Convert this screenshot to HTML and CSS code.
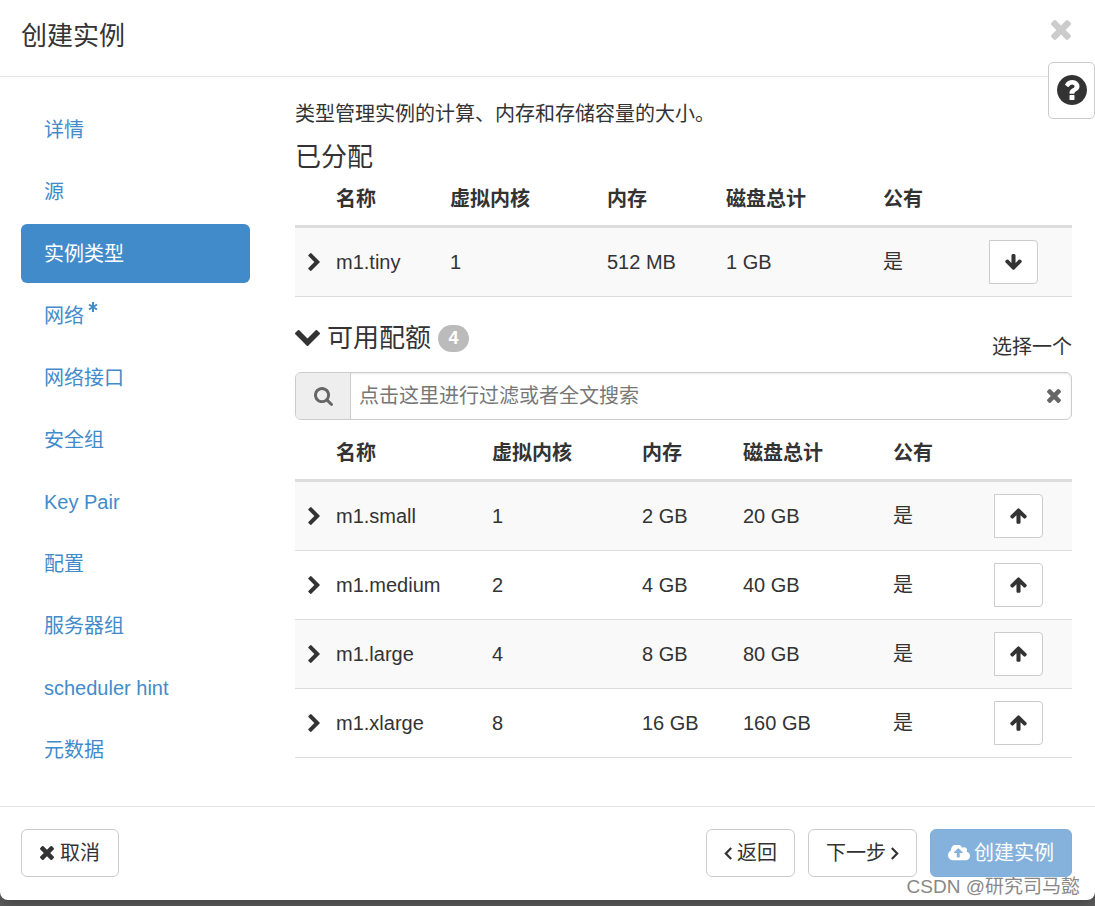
FILE: index.html
```html
<!DOCTYPE html>
<html lang="zh-CN">
<head>
<meta charset="utf-8">
<title>创建实例</title>
<link rel="stylesheet" href="styles.css">
</head>
<body>
<svg class="sprite" aria-hidden="true">
  <symbol id="times" viewBox="302 366 1188 1188"><path d="M1490 1322q0 40-28 68l-136 136q-28 28-68 28t-68-28l-294-294-294 294q-28 28-68 28t-68-28l-136-136q-28-28-28-68t28-68l294-294-294-294q-28-28-28-68t28-68l136-136q28-28 68-28t68 28l294 294 294-294q28-28 68-28t68 28l136 136q28 28 28 68t-28 68l-294 294 294 294q28 28 28 68z"/></symbol>
  <symbol id="chevron-right" viewBox="346 26 1036 1612"><path d="M1363 877l-742 742q-19 19-45 19t-45-19l-166-166q-19-19-19-45t19-45l531-531-531-531q-19-19-19-45t19-45l166-166q19-19 45-19t45 19l742 742q19 19 19 45t-19 45z"/></symbol>
  <symbol id="chevron-down" viewBox="90 533 1612 1035"><path d="M1683 808l-742 741q-19 19-45 19t-45-19l-742-741q-19-19-19-45.500t19-45.500l166-165q19-19 45-19t45 19l531 531 531-531q19-19 45-19t45 19l166 165q19 19 19 45.500t-19 45.500z"/></symbol>
  <symbol id="question" viewBox="128 128 1536 1536"><path d="M1024 1376v-192q0-14-9-23t-23-9h-192q-14 0-23 9t-9 23v192q0 14 9 23t23 9h192q14 0 23-9t9-23zm256-672q0-88-55.500-163t-138.500-116-170-41q-243 0-371 213-15 24 8 42l132 100q7 6 19 6 16 0 25-12 53-68 86-92 34-24 86-24 48 0 85.500 26t37.500 59q0 38-20 61t-68 45q-63 28-115.500 86.500t-52.500 125.500v36q0 14 9 23t23 9h192q14 0 23-9t9-23q0-19 21.500-49.500t54.500-49.500q32-18 49-28.500t46-35 44.500-48 28-60.500 12.500-81zm384 192q0 209-103 385.500t-279.500 279.500-385.500 103-385.500-103-279.500-279.500-103-385.500 103-385.500 279.500-279.500 385.500-103 385.500 103 279.500 279.500 103 385.500z"/></symbol>
  <symbol id="search" viewBox="64 128 1664 1664"><path d="M1216 832q0-185-131.500-316.500t-316.500-131.500-316.500 131.500-131.500 316.500 131.500 316.500 316.500 131.500 316.500-131.500 131.500-316.500zm512 832q0 52-38 90t-90 38q-54 0-90-38l-343-342q-179 124-399 124-143 0-273.500-55.500t-225-150-150-225-55.500-273.500 55.500-273.500 150-225 225-150 273.500-55.500 273.500 55.500 225 150 150 225 55.500 273.500q0 220-124 399l343 343q37 37 37 90z"/></symbol>
  <symbol id="arrow-up" viewBox="100 170 1592 1510"><path d="M1675 971q0 51-37 90l-75 75q-38 38-91 38-54 0-90-38l-294-293v704q0 52-37.500 84.500t-90.500 32.500h-128q-53 0-90.500-32.500t-37.500-84.500v-704l-294 293q-36 38-90 38t-90-38l-75-75q-38-38-38-90 0-53 38-91l651-651q35-37 90-37 54 0 91 37l651 651q37 39 37 91z"/></symbol>
  <symbol id="arrow-down" viewBox="100 120 1592 1510"><path d="M1675 832q0 53-37 90l-651 652q-39 37-91 37-53 0-90-37l-651-652q-38-36-38-90 0-53 38-91l74-75q39-37 91-37 53 0 90 37l294 294v-704q0-52 38-90t90-38h128q52 0 90 38t38 90v704l294-294q37-37 90-37 52 0 91 37l75 75q37 39 37 91z"/></symbol>
  <symbol id="cloud-upload" viewBox="-64 256 1920 1280"><path d="M1216 864q0-14-9-23l-352-352q-9-9-23-9t-23 9l-351 351q-10 12-10 24 0 14 9 23t23 9h224v352q0 13 9.500 22.500t22.500 9.500h192q13 0 22.500-9.500t9.500-22.500v-352h224q13 0 22.500-9.500t9.500-22.500zm640 288q0 159-112.500 271.500t-271.500 112.500h-1088q-185 0-316.500-131.500t-131.500-316.500q0-130 70-240t188-165q-2-30-2-43 0-212 150-362t362-150q156 0 285.500 87t188.500 231q71-62 166-62 106 0 181 75t75 181q0 76-41 138 130 31 213.500 135.500t83.500 238.500z"/></symbol>
  <symbol id="angle-left" viewBox="0 0 8 12"><path class="line" d="M6.500 1L1.500 6l5 5"/></symbol>
  <symbol id="angle-right" viewBox="0 0 8 12"><path class="line" d="M1.500 1l5 5-5 5"/></symbol>
  <symbol id="asterisk" viewBox="0 0 10 10"><path class="line" d="M5 0v10M1 2.500l8 5M9 2.500l-8 5"/></symbol>
</svg>

<div class="modal">
  <header class="modal-header">
    <h1 class="title">创建实例</h1>
    <button class="close" type="button" aria-label="关闭"><svg class="icon-close"><use href="#times"/></svg></button>
  </header>
  <button class="help" type="button" aria-label="帮助"><svg class="icon-help"><use href="#question"/></svg></button>

  <div class="modal-body">
    <nav class="steps">
      <a class="step" href="#">详情</a>
      <a class="step" href="#">源</a>
      <a class="step active" href="#">实例类型</a>
      <a class="step" href="#">网络<svg class="icon-required"><use href="#asterisk"/></svg></a>
      <a class="step" href="#">网络接口</a>
      <a class="step" href="#">安全组</a>
      <a class="step" href="#">Key Pair</a>
      <a class="step" href="#">配置</a>
      <a class="step" href="#">服务器组</a>
      <a class="step" href="#">scheduler hint</a>
      <a class="step" href="#">元数据</a>
    </nav>

    <main class="content">
      <p class="intro">类型管理实例的计算、内存和存储容量的大小。</p>
      <h2 class="heading">已分配</h2>
      <table class="table allocated">
        <colgroup><col class="c-toggle"><col class="c-name"><col class="c-vcpu"><col class="c-ram"><col class="c-disk"><col class="c-public"><col class="c-action"></colgroup>
        <thead><tr><th></th><th>名称</th><th>虚拟内核</th><th>内存</th><th>磁盘总计</th><th>公有</th><th></th></tr></thead>
        <tbody>
          <tr><td><svg class="icon-toggle"><use href="#chevron-right"/></svg></td><td>m1.tiny</td><td>1</td><td>512 MB</td><td>1 GB</td><td>是</td><td><button class="move" type="button" aria-label="移除"><svg class="icon-move"><use href="#arrow-down"/></svg></button></td></tr>
        </tbody>
      </table>

      <div class="section-bar">
        <h2 class="heading available-heading"><svg class="icon-expand"><use href="#chevron-down"/></svg>可用配额<span class="badge">4</span></h2>
        <span class="hint">选择一个</span>
      </div>

      <div class="search">
        <span class="search-addon"><svg class="icon-search"><use href="#search"/></svg></span>
        <input class="search-input" type="text" aria-label="过滤" placeholder="点击这里进行过滤或者全文搜索">
        <button class="search-clear" type="button" aria-label="清除"><svg class="icon-times"><use href="#times"/></svg></button>
      </div>

      <table class="table available">
        <colgroup><col class="c-toggle"><col class="c-name"><col class="c-vcpu"><col class="c-ram"><col class="c-disk"><col class="c-public"><col class="c-action"></colgroup>
        <thead><tr><th></th><th>名称</th><th>虚拟内核</th><th>内存</th><th>磁盘总计</th><th>公有</th><th></th></tr></thead>
        <tbody>
          <tr><td><svg class="icon-toggle"><use href="#chevron-right"/></svg></td><td>m1.small</td><td>1</td><td>2 GB</td><td>20 GB</td><td>是</td><td><button class="move" type="button" aria-label="分配"><svg class="icon-move"><use href="#arrow-up"/></svg></button></td></tr>
          <tr><td><svg class="icon-toggle"><use href="#chevron-right"/></svg></td><td>m1.medium</td><td>2</td><td>4 GB</td><td>40 GB</td><td>是</td><td><button class="move" type="button" aria-label="分配"><svg class="icon-move"><use href="#arrow-up"/></svg></button></td></tr>
          <tr><td><svg class="icon-toggle"><use href="#chevron-right"/></svg></td><td>m1.large</td><td>4</td><td>8 GB</td><td>80 GB</td><td>是</td><td><button class="move" type="button" aria-label="分配"><svg class="icon-move"><use href="#arrow-up"/></svg></button></td></tr>
          <tr><td><svg class="icon-toggle"><use href="#chevron-right"/></svg></td><td>m1.xlarge</td><td>8</td><td>16 GB</td><td>160 GB</td><td>是</td><td><button class="move" type="button" aria-label="分配"><svg class="icon-move"><use href="#arrow-up"/></svg></button></td></tr>
        </tbody>
      </table>
    </main>
  </div>

  <footer class="modal-footer">
    <button class="btn cancel" type="button"><svg class="icon-times"><use href="#times"/></svg>取消</button>
    <button class="btn tight" type="button"><svg class="icon-angle"><use href="#angle-left"/></svg>返回</button>
    <button class="btn tight" type="button">下一步<svg class="icon-angle"><use href="#angle-right"/></svg></button>
    <button class="btn primary" type="button" disabled><svg class="icon-cloud"><use href="#cloud-upload"/></svg>创建实例</button>
  </footer>
  <div class="watermark">CSDN @研究司马懿</div>
</div>
</body>
</html>
```
FILE: styles.css
```css
* { box-sizing: border-box; }

body {
  margin: 0;
  padding-bottom: 6px;
  background: #5e5e5e;
  color: #333;
  font: 20px/28px "Liberation Sans", "Noto Sans CJK SC", sans-serif;
}

svg { flex: none; fill: currentColor; }
.sprite { position: absolute; width: 0; height: 0; }
.line { fill: none; stroke: currentColor; stroke-width: 2; }

button {
  margin: 0;
  font: inherit;
  color: inherit;
}

.modal {
  position: relative;
  background: #fff;
  border-radius: 0 0 8px 8px;
  box-shadow: 0 4px 16px rgba(0, 0, 0, 0.3);
}

.modal-header {
  display: flex;
  justify-content: space-between;
  align-items: flex-start;
  padding: 20px 24px 24px 21px;
  border-bottom: 1px solid #e5e5e5;
}

.title, .heading {
  margin: 0;
  font-size: 26px;
  font-weight: 400;
  line-height: 32px;
}

.close {
  display: flex;
  padding: 0;
  border: 0;
  background: none;
  color: #ccc;
}

.icon-close { width: 20px; height: 20px; }

.help {
  position: absolute;
  top: 62px;
  right: 0;
  display: flex;
  align-items: center;
  justify-content: center;
  width: 47px;
  height: 57px;
  padding: 0 0 2px;
  border: 1px solid #ccc;
  border-radius: 5px;
  background: #fff;
}

.icon-help { width: 30px; height: 30px; }

.modal-body {
  display: flex;
  gap: 45px;
  padding: 23px 23px 27px 21px;
}

.steps {
  display: flex;
  flex: 0 0 229px;
  flex-direction: column;
  gap: 3px;
}

.step {
  display: flex;
  align-items: center;
  gap: 4px;
  height: 59px;
  padding: 0 23px;
  border-radius: 6px;
  color: #428bca;
  text-decoration: none;
}

.step.active { background: #428bca; color: #fff; }

.icon-required {
  align-self: flex-start;
  width: 10px;
  height: 10px;
  margin-top: 16px;
}

.content { flex: 1; min-width: 0; }

.intro { margin: 0 0 13px; }

.table {
  width: 100%;
  table-layout: fixed;
  border-collapse: separate;
  border-spacing: 0;
  text-align: left;
}

.table th {
  padding: 12px 0 12px 11px;
  border-bottom: 3px solid #ddd;
  font-weight: 700;
}

.table td {
  height: 69px;
  padding: 0 0 0 11px;
  border-bottom: 1px solid #ddd;
}

.table td:first-child { padding-left: 12px; }

.table tbody tr:nth-child(odd) { background: #f9f9f9; }

.c-toggle { width: 30px; }
.allocated .c-name { width: 114px; }
.allocated .c-vcpu { width: 157px; }
.allocated .c-ram { width: 119px; }
.allocated .c-disk { width: 157px; }
.allocated .c-public { width: 106px; }
.allocated .c-action { width: 94px; }
.available .c-name { width: 156px; }
.available .c-vcpu { width: 150px; }
.available .c-ram { width: 101px; }
.available .c-disk { width: 150px; }
.available .c-public { width: 101px; }
.available .c-action { width: 89px; }

.icon-toggle {
  display: block;
  width: 14px;
  height: 18px;
}

.move {
  display: flex;
  align-items: center;
  justify-content: center;
  width: 49px;
  height: 44px;
  padding: 0;
  border: 1px solid #ccc;
  border-radius: 0 4px 4px 0;
  background: #fff;
}

.icon-move { width: 17px; height: 16px; }

.section-bar {
  display: flex;
  justify-content: space-between;
  align-items: flex-start;
  margin: 25px 0 11px;
}

.available-heading {
  display: flex;
  align-items: center;
  gap: 7px;
}

.icon-expand { width: 25px; height: 16px; }

.badge {
  min-width: 31px;
  padding: 2px 10px;
  border-radius: 14px;
  background: #bbb;
  color: #fff;
  font-size: 18px;
  font-weight: 700;
  line-height: 23px;
  text-align: center;
}

.hint { padding-top: 11px; }

.search {
  display: flex;
  height: 48px;
  margin-bottom: 7px;
  overflow: hidden;
  border: 1px solid #ccc;
  border-radius: 6px;
  box-shadow: inset 0 1px 2px rgba(0, 0, 0, 0.1);
}

.search-addon {
  display: flex;
  flex: 0 0 55px;
  align-items: center;
  justify-content: center;
  border-right: 1px solid #ccc;
  background: #eee;
  color: #666;
}

.icon-search { width: 19px; height: 19px; }

.search-input {
  flex: 1;
  min-width: 0;
  padding: 0 8px;
  border: 0;
  outline: 0;
  background: none;
  color: #333;
  font: inherit;
}

.search-input::placeholder { color: #777; opacity: 1; }

.search-clear {
  display: flex;
  align-items: center;
  padding: 0 10px;
  border: 0;
  background: none;
  color: #666;
}

.icon-times { width: 14px; height: 14px; }

.modal-footer {
  display: flex;
  gap: 13px;
  padding: 22px 23px 23px 21px;
  border-top: 1px solid #e5e5e5;
}

.btn {
  display: flex;
  align-items: center;
  gap: 6px;
  height: 48px;
  padding: 0 18px;
  border: 1px solid #ccc;
  border-radius: 6px;
  background: #fff;
}

.btn.tight {
  gap: 4px;
  padding: 0 17px;
}

.cancel { margin-right: auto; }

.btn.primary {
  gap: 4px;
  padding: 0 17px;
  border-color: #80b0da;
  background: #85b2dc;
  color: #fff;
}

.icon-angle { width: 9px; height: 13px; }
.icon-cloud { width: 22px; height: 16px; }

.watermark {
  position: absolute;
  right: 15px;
  bottom: 0;
  color: #888;
  font-size: 19px;
  line-height: 26px;
  text-shadow: 0 0 1px #fff;
}
```
